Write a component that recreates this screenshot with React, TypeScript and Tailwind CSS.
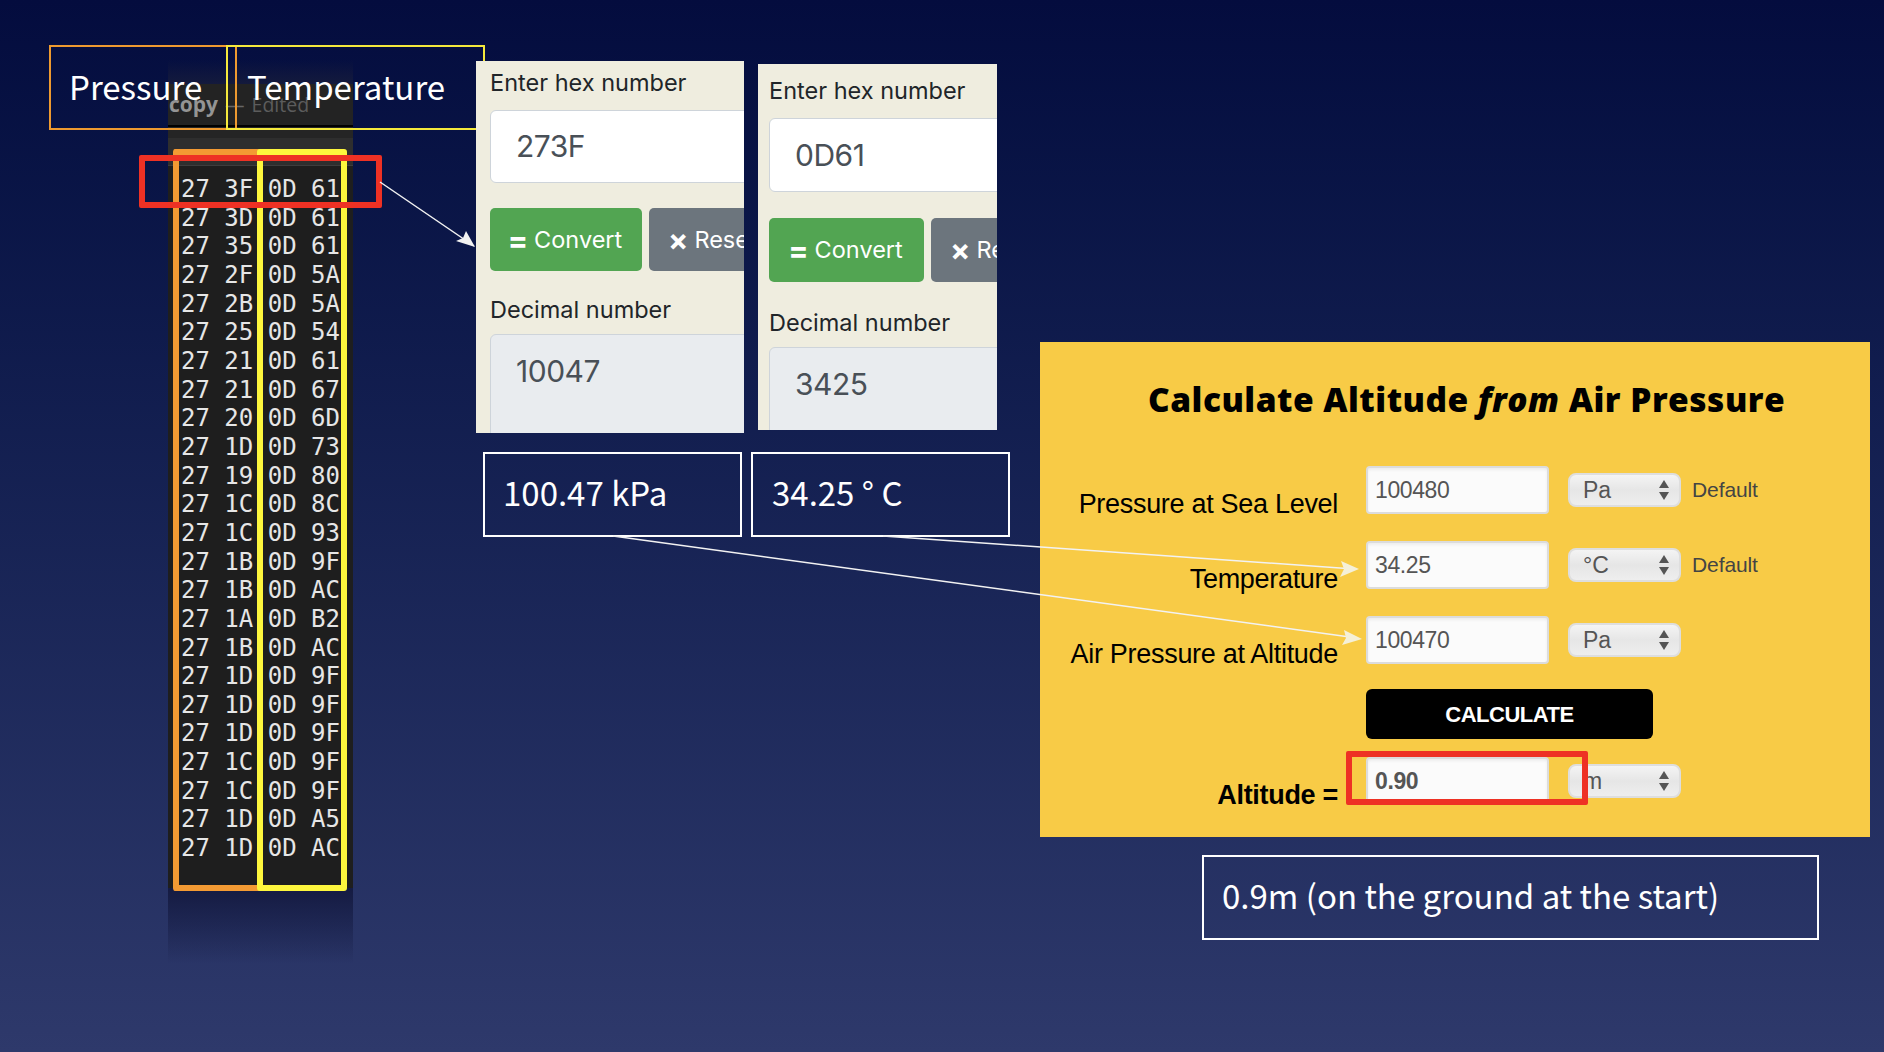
const rows = [
  "27 3F 0D 61", "27 3D 0D 61", "27 35 0D 61", "27 2F 0D 5A", "27 2B 0D 5A", "27 25 0D 54",
  "27 21 0D 61", "27 21 0D 67", "27 20 0D 6D", "27 1D 0D 73", "27 19 0D 80", "27 1C 0D 8C",
  "27 1C 0D 93", "27 1B 0D 9F", "27 1B 0D AC", "27 1A 0D B2", "27 1B 0D AC", "27 1D 0D 9F",
  "27 1D 0D 9F", "27 1D 0D 9F", "27 1C 0D 9F", "27 1C 0D 9F", "27 1D 0D A5", "27 1D 0D AC",
]

const slideFont = "font-['Noto_Sans_CJK_SC','Open_Sans',sans-serif]"
const cardFont = "font-['Inter','Liberation_Sans',sans-serif]"
const formFont = "font-['Liberation_Sans',Arial,sans-serif]"

function Terminal() {
  return (
    <div className="absolute left-[168px] top-[60px] w-[185px] h-[904px]">
      <div className="h-[24px] bg-gradient-to-b from-[#10163f]/0 to-[#141a3c]" />
      <div className="h-[43px] bg-[#232323] border-b-2 border-black flex items-center gap-[7px] text-[19.5px] font-['Open_Sans',sans-serif]">
        <span className="font-bold text-[21px] text-[#949494] ml-[1px]">copy</span>
        <span className="text-[#666]">—</span>
        <span className="text-[#5c5c5c]">Edited</span>
      </div>
      <div className="h-[11px] bg-[#252525]" />
      <div className="h-[28px] bg-[#2e2e2e] border-b border-[#3d3d3d]" />
      <div className="h-[722px] bg-[#1e1e1e] pl-[13px] pt-[9px] font-['DejaVu_Sans_Mono',monospace] text-[24px] leading-[28.65px] text-[#e6e6e6]">
        {rows.map((r, i) => (
          <div key={i} className="whitespace-pre">{r}</div>
        ))}
      </div>
      <div className="h-[76px] bg-gradient-to-b from-[#151b42] to-[#2a3462]/0" />
    </div>
  )
}

function HexCard({ cls, hex, dec, inputH, btnH, btnW, btnGap, decGap }: { cls: string; hex: string; dec: string; inputH: string; btnH: string; btnW: string; btnGap: string; decGap: string }) {
  return (
    <div className={`absolute bg-[#efeddf] overflow-hidden ${cardFont} ${cls}`}>
      <div className="w-[400px] text-[23.5px]">
        <div className="text-[#212529] leading-[36px]">Enter hex number</div>
        <div className={`mt-[9px] bg-white border border-[#ced4da] rounded-[6px] flex items-center pl-[25px] text-[#495057] text-[30px] tracking-[-0.5px] ${inputH}`}>{hex}</div>
        <div className={`flex gap-[7px] ${btnGap}`}>
          <div className={`bg-[#52a552] rounded-[5px] text-white flex items-center justify-center gap-[6px] pr-[2px] ${btnH} ${btnW}`}>
            <span className="font-bold text-[30px] leading-none">=</span>
            <span>Convert</span>
          </div>
          <div className={`bg-[#6c757d] rounded-[5px] text-white flex items-center pl-[19px] gap-[6px] w-[200px] ${btnH}`}>
            <span className="font-bold text-[30px] leading-none">×</span>
            <span>Reset</span>
          </div>
        </div>
        <div className={`text-[#212529] leading-[36px] ${decGap}`}>Decimal number</div>
        <div className="mt-[6px] h-[140px] bg-[#e9ecef] border border-[#ced4da] rounded-[6px] pl-[25px] pt-[14px] text-[#495057] text-[30px] tracking-[-0.5px]">{dec}</div>
      </div>
    </div>
  )
}

function Updown() {
  return (
    <svg width="12" height="24" viewBox="0 0 12 24" className="absolute right-[9px] top-1/2 -translate-y-1/2">
      <path d="M6 2 L11 10 L1 10 Z" fill="#555" />
      <path d="M6 22 L11 14 L1 14 Z" fill="#555" />
    </svg>
  )
}

function FormRow({ label, value, unit, note, bold }: { label: string; value: string; unit: string; note?: boolean; bold?: boolean }) {
  return (
    <div className="flex h-[48px]">
      <div className={`w-[298px] text-right self-end mb-[-6px] text-[27px] tracking-[-0.3px] leading-[32px] text-black whitespace-nowrap ${bold ? "font-bold" : ""}`}>{label}</div>
      <div className={`ml-[28px] w-[183px] h-[48px] bg-[#fbfbfb] border-2 border-[#dcdcdc] shadow-[inset_0_2px_3px_rgba(0,0,0,0.06)] rounded-[4px] pl-[7px] flex items-center text-[23px] tracking-[-0.4px] text-[#555] ${bold ? "font-bold" : ""}`}>{value}</div>
      <div className="ml-[19px] self-center relative w-[113px] h-[34px] rounded-[8px] border-2 border-[#dedede] bg-gradient-to-b from-[#f4f4f4] via-[#e6e6e6] to-[#eeeeee] pl-[13px] flex items-center text-[23px] text-[#555]">
        {unit}
        <Updown />
      </div>
      {note && <div className="ml-[11px] self-center text-[21px] tracking-[-0.1px] text-[#444]">Default</div>}
    </div>
  )
}

function AltitudeForm() {
  return (
    <div className={`absolute left-[1040px] top-[342px] w-[830px] h-[495px] bg-[#f8cb46] ${formFont}`}>
      <div className="mt-[35px] ml-[108px] font-['Open_Sans',sans-serif] font-extrabold text-[33.5px] tracking-[0.48px] leading-[44px] text-black whitespace-pre">
        Calculate Altitude <em>from</em> Air Pressure
      </div>
      <div className="mt-[45px] flex flex-col gap-[27px]">
        <FormRow label="Pressure at Sea Level" value="100480" unit="Pa" note />
        <FormRow label="Temperature" value="34.25" unit="°C" note />
        <FormRow label="Air Pressure at Altitude" value="100470" unit="Pa" />
      </div>
      <div className="mt-[25px] ml-[326px] w-[287px] h-[50px] bg-black rounded-[6px] flex items-center justify-center text-white font-bold text-[22px] tracking-[-0.5px]">CALCULATE</div>
      <div className="mt-[18px]">
        <FormRow label="Altitude =" value="0.90" unit="m" bold />
      </div>
    </div>
  )
}

function ResultBox({ cls, text }: { cls: string; text: string }) {
  return (
    <div className={`absolute border-2 border-white flex items-center text-white pb-[3px] text-[33px] ${slideFont} ${cls}`}>{text}</div>
  )
}

export default function App() {
  return (
    <div className="relative w-[1884px] h-[1052px] overflow-hidden bg-gradient-to-b from-[#040c3e] to-[#2e396b]">
      <Terminal />

      <div className={`absolute left-[49px] top-[45px] w-[188px] h-[85px] border-2 border-[#ee9a30] flex items-center pl-[18px] pb-[2px] text-white text-[33px] ${slideFont}`}>Pressure</div>
      <div className={`absolute left-[226px] top-[45px] w-[259px] h-[85px] border-2 border-[#f5e93c] flex items-center pl-[19px] pb-[2px] text-white text-[33px] ${slideFont}`}>Temperature</div>

      {/* highlighted byte columns */}
      <div className="absolute left-[173px] top-[149px] w-[90px] h-[742px] border-[6px] border-r-0 border-[#f39a33] rounded-[3px]" />
      <div className="absolute left-[257px] top-[149px] w-[90px] h-[742px] border-[6px] border-[#fdf63d] rounded-[3px]" />
      <div className="absolute left-[139px] top-[155px] w-[243px] h-[53px] border-[6px] border-[#ee3124] rounded-[2px]" />

      <HexCard cls="left-[476px] top-[61px] w-[268px] h-[372px] pl-[14px] pt-[4px]" hex="273F" dec="10047" inputH="h-[73px]" btnH="h-[63px]" btnW="w-[152px]" btnGap="mt-[25px]" decGap="mt-[21px]" />
      <HexCard cls="left-[758px] top-[64px] w-[239px] h-[366px] pl-[11px] pt-[9px]" hex="0D61" dec="3425" inputH="h-[74px]" btnH="h-[64px]" btnW="w-[155px]" btnGap="mt-[26px]" decGap="mt-[23px]" />

      <ResultBox cls="left-[483px] top-[452px] w-[259px] h-[85px] pl-[18px]" text="100.47 kPa" />
      <ResultBox cls="left-[751px] top-[452px] w-[259px] h-[85px] pl-[19px]" text="34.25 ° C" />

      <AltitudeForm />

      <div className="absolute left-[1346px] top-[751px] w-[242px] h-[54px] border-[6px] border-[#ee3124] rounded-[2px]" />

      <ResultBox cls="left-[1202px] top-[855px] w-[617px] h-[85px] pl-[18px]" text="0.9m (on the ground at the start)" />

      {/* arrows */}
      <svg className="absolute inset-0 pointer-events-none" width="1884" height="1052" viewBox="0 0 1884 1052" fill="none">
        <path d="M380 182 L474 246" stroke="#f2f2f2" strokeWidth="1.5" />
        <path d="M475 247 L456 241 L463 238 L466 231 Z" fill="#f2f2f2" />
        <path d="M613 536 L1357 638" stroke="#f2f2f2" strokeWidth="1.5" />
        <path d="M1362 639 L1342 645 L1346 638 L1344 630 Z" fill="#f5f0d8" />
        <path d="M883 536 L1354 569" stroke="#f2f2f2" strokeWidth="1.5" />
        <path d="M1359 569 L1340 577 L1344 569 L1341 561 Z" fill="#f5f0d8" />
      </svg>
    </div>
  )
}
